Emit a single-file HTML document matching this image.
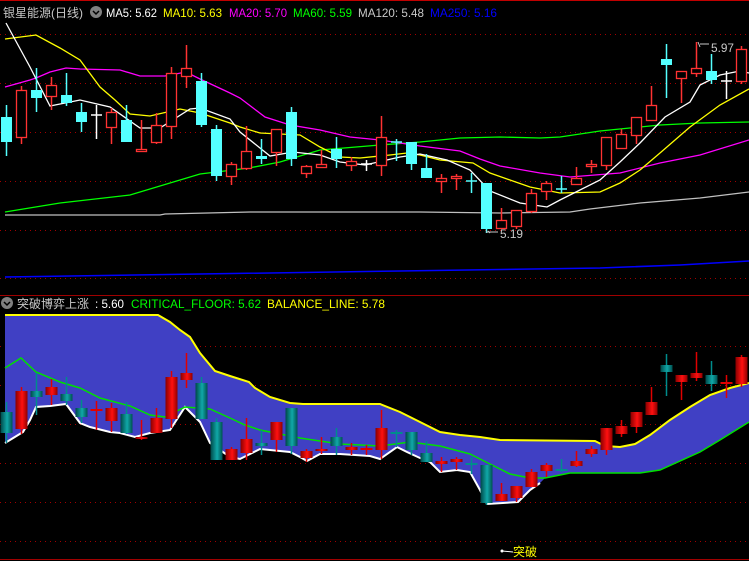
<!DOCTYPE html>
<html><head><meta charset="utf-8"><style>
html,body{margin:0;padding:0;background:#000;width:749px;height:561px;overflow:hidden}
svg{position:absolute;left:0;top:0}
.t{font-family:"Liberation Sans","Noto Sans CJK SC",sans-serif;font-size:12px}
</style></head><body>
<svg id="s" width="749" height="561" xmlns="http://www.w3.org/2000/svg">
<defs>
<linearGradient id="gr" x1="0" x2="1" y1="0" y2="0"><stop offset="0" stop-color="#8a0000"/><stop offset="0.55" stop-color="#ff1010"/><stop offset="1" stop-color="#900000"/></linearGradient>
<linearGradient id="gt" x1="0" x2="1" y1="0" y2="0"><stop offset="0" stop-color="#004848"/><stop offset="0.55" stop-color="#10a8a8"/><stop offset="1" stop-color="#005050"/></linearGradient>
</defs>
<line x1="0" y1="0.5" x2="749" y2="0.5" stroke="#c00000"/>
<line x1="0" y1="295.5" x2="749" y2="295.5" stroke="#a00000"/>
<line x1="0" y1="559.5" x2="749" y2="559.5" stroke="#a00000"/>
<g id="grid" stroke="#a00000" stroke-dasharray="1,4"></g>
<g id="band"></g>
<g id="lines" fill="none"></g>
<g id="cand"></g>
<text class="t" x="3" y="17" fill="#c8c8c8" textLength="80" lengthAdjust="spacingAndGlyphs">银星能源(日线)</text>
<circle cx="96" cy="12" r="6" fill="#808080"/><path d="M93 11l3 3 3-3" stroke="#000" fill="none" stroke-width="1.5"/>
<text class="t" x="106" y="17" fill="#fff" textLength="51" lengthAdjust="spacingAndGlyphs">MA5: 5.62</text>
<text class="t" x="163" y="17" fill="#ffff00" textLength="59" lengthAdjust="spacingAndGlyphs">MA10: 5.63</text>
<text class="t" x="229" y="17" fill="#ff00ff" textLength="58" lengthAdjust="spacingAndGlyphs">MA20: 5.70</text>
<text class="t" x="293" y="17" fill="#00ff00" textLength="59" lengthAdjust="spacingAndGlyphs">MA60: 5.59</text>
<text class="t" x="358" y="17" fill="#c8c8c8" textLength="66" lengthAdjust="spacingAndGlyphs">MA120: 5.48</text>
<text class="t" x="430" y="17" fill="#0000ff" textLength="67" lengthAdjust="spacingAndGlyphs">MA250: 5.16</text>
<circle cx="7" cy="303" r="6" fill="#808080"/><path d="M4 302l3 3 3-3" stroke="#000" fill="none" stroke-width="1.5"/>
<text class="t" x="17" y="308" fill="#c8c8c8" textLength="72" lengthAdjust="spacingAndGlyphs">突破博弈上涨</text>
<text class="t" x="95" y="308" fill="#fff" textLength="29" lengthAdjust="spacingAndGlyphs">: 5.60</text>
<text class="t" x="131" y="308" fill="#00ff00" textLength="130" lengthAdjust="spacingAndGlyphs">CRITICAL_FLOOR: 5.62</text>
<text class="t" x="267" y="308" fill="#ffff00" textLength="118" lengthAdjust="spacingAndGlyphs">BALANCE_LINE: 5.78</text>
<text class="t" x="711" y="52" fill="#c8c8c8" textLength="23" lengthAdjust="spacingAndGlyphs">5.97</text>
<path d="M698 42l2 5 M700 44h9" stroke="#c8c8c8" fill="none"/>
<text class="t" x="500" y="238" fill="#c8c8c8" textLength="23" lengthAdjust="spacingAndGlyphs">5.19</text>
<path d="M488 231l2 2 M486 232h12" stroke="#c8c8c8" fill="none"/>
<text class="t" x="513" y="556" fill="#ffff00" textLength="24" lengthAdjust="spacingAndGlyphs">突破</text>
<circle cx="502" cy="551" r="1.5" fill="#fff"/><line x1="502" y1="551" x2="513" y2="552" stroke="#fff"/>
</svg>
<script>
var NS="http://www.w3.org/2000/svg",s=document.getElementById('s');
function el(p,t,a){var e=document.createElementNS(NS,t);for(var k in a)e.setAttribute(k,a[k]);document.getElementById(p).appendChild(e);return e;}
[34,83,132,181,230,278,346,385,424,463,502,541].forEach(function(y){el('grid','line',{x1:0,x2:749,y1:y+.5,y2:y+.5});});
function P(a){return a.map(function(p){return p[0]+','+p[1]}).join(' ');}
var top_=[[5,315],[158,315],[170,322],[180,330],[190,337],[200,353],[215,371],[230,376],[249,382],[255,388],[270,397],[290,403],[303,404],[380,404],[400,412],[420,422],[440,432],[460,435],[480,437],[500,440],[595,441],[605,446],[620,447],[635,444],[650,435],[670,420],[690,407],[710,395],[730,388],[749,383]];
var bot=[[5,443],[23,432],[30,420],[36,407],[50,406],[66,404],[80,423],[90,427],[110,432],[120,433],[135,437],[150,433],[170,430],[185,407],[200,422],[210,443],[230,457],[240,459],[260,449],[290,452],[300,457],[307,461],[320,454],[340,454],[370,456],[380,459],[397,447],[407,452],[420,458],[430,462],[440,472],[457,470],[470,472],[480,490],[487,504],[518,502],[530,490],[540,483],[545,478],[570,473],[640,473],[660,470],[700,452],[720,440],[749,422]];
el('band','polygon',{points:P(top_.concat(bot.slice().reverse())),fill:'#4040c4'});
var mid=[[5,368],[21,358],[36,372],[60,382],[80,388],[100,398],[130,406],[150,415],[165,417],[185,407],[210,409],[230,418],[245,425],[260,430],[300,438],[340,444],[380,446],[410,442],[440,446],[470,454],[490,464],[510,474],[530,478],[545,478],[570,473],[640,473],[660,470],[700,452],[720,440],[749,422]];
el('lines','polyline',{points:P(top_),stroke:'#ffff00','stroke-width':2});
el('lines','polyline',{points:P(bot.slice(0,38)),stroke:'#fff','stroke-width':2});
el('lines','polyline',{points:P(mid),stroke:'#00e000','stroke-width':1.5});
var L={
'#c8c8c8':[[5,277],[200,274],[400,271],[600,268],[680,265],[749,261]],
'#a0a0a0':[[5,215],[160,215],[165,214],[250,212],[420,212],[500,213],[570,212],[590,209],[640,203],[700,198],[749,192]],
'#00ff00':[[5,212],[60,203],[130,195],[200,174],[249,168],[280,162],[320,150],[380,145],[420,142],[460,138],[500,137],[540,138],[560,137],[600,131],[660,125],[700,123],[749,122]],
'#ff00ff':[[5,87],[30,80],[36,78],[50,72],[66,68],[80,69],[120,70],[140,76],[165,76],[186,72],[200,79],[230,93],[240,98],[265,117],[290,125],[320,130],[350,137],[380,140],[420,146],[460,151],[480,159],[500,166],[540,173],[570,177],[620,173],[660,163],[700,155],[749,140]],
'#ffff00':[[5,39],[36,35],[60,48],[80,60],[100,87],[115,100],[130,114],[150,116],[180,109],[200,113],[230,123],[240,127],[260,133],[300,135],[320,147],[340,157],[360,158],[390,155],[407,153],[420,155],[440,160],[473,163],[490,173],[530,187],[560,193],[600,192],[620,183],[640,170],[660,153],[690,127],[720,105],[749,89]],
'#ffffff':[[6,23],[30,67],[50,106],[80,100],[110,107],[140,128],[160,128],[190,109],[200,108],[230,119],[240,132],[260,148],[270,156],[293,152],[320,155],[340,162],[365,165],[400,157],[420,154],[447,160],[470,170],[490,191],[520,203],[547,207],[560,200],[600,180],[620,162],[640,143],[665,117],[690,102],[700,85],[720,75],[740,71],[749,73]]};
el('lines','polyline',{points:P(L['#c8c8c8']),stroke:'#0000ff','stroke-width':1.5});
for(var c in L){if(c=='#c8c8c8')continue;el('lines','polyline',{points:P(L[c]),stroke:c=='#a0a0a0'?'#c0c0c0':c,'stroke-width':1.3});}
var T=[['c',117,142,105,156],['r',90,137,86,144],['c',90,98,68,112],['r',85,96,77,110],['c',95,103,73,106],['c',112,122,103,132],['w',115,115,105,139],['r',112,127,108,144],['c',120,142,105,142],['r',149,151,120,151],['r',125,142,113,144],['r',73,126,67,139],['r',68,76,45,88],['c',81,125,73,127],['c',129,176,125,181],['r',164,176,162,185],['r',151,168,126,170],['c',156,159,139,164],['r',129,152,129,166],['c',112,159,107,166],['r',166,173,165,178],['r',164,167,150,168],['c',149,159,137,168],['r',161,165,157,171],['w',164,164,160,171],['r',137,165,116,176],['k',142,143,139,161],['c',142,164,142,170],['c',168,178,154,178],['r',178,181,174,193],['r',176,178,174,190],['k',181,181,173,193],['c',183,229,183,233],['r',220,228,208,228],['r',210,226,210,229],['r',193,211,189,213],['r',183,191,181,200],['k',189,189,176,193],['r',178,184,167,185],['r',164,166,160,173],['r',137,165,137,170],['r',134,148,129,149],['r',117,135,117,144],['r',105,120,86,120],['c',59,65,44,98],['r',71,78,71,103],['r',68,73,42,77],['c',71,80,54,84],['w',81,81,71,99],['r',49,81,46,84]];
var B=[['t',412,433,402,443],['r',391,429,387,434],['t',391,397,373,415],['r',387,395,379,405],['t',394,401,377,405],['t',408,417,400,423],['rx',410,410,401,430],['r',408,421,403,432],['t',414,433,402,434],['r',437,439,420,440],['r',418,433,408,433],['r',377,419,371,428],['r',373,380,353,388],['t',383,419,377,419],['t',422,460,418,460],['r',449,460,447,460],['r',439,453,418,460],['t',443,446,430,455],['r',422,440,422,452],['t',408,446,408,454],['r',451,458,449,462],['r',449,451,437,454],['t',437,446,428,455],['r',447,450,443,455],['rx',449,449,445,455],['r',428,450,410,459],['tx',433,433,430,447],['t',432,450,432,455],['t',453,462,441,462],['r',461,464,457,472],['r',459,462,457,470],['tx',464,464,457,474],['t',465,503,465,505],['r',494,501,483,501],['r',486,498,486,502],['r',472,487,469,487],['r',465,471,463,477],['tx',470,470,459,472],['r',461,466,451,467],['r',449,454,446,457],['r',428,450,428,455],['r',426,434,420,437],['r',412,427,412,433],['r',402,415,387,415],['t',365,372,354,396],['r',375,382,375,400],['r',373,378,352,381],['t',375,384,361,391],['rx',383,383,375,398],['r',357,384,355,387]];
T.forEach(function(d,i){var x=6.5+15*i,col=d[0]=='r'?'#ff3232':d[0]=='w'?'#ffffff':'#54ffff';
 el('cand','line',{x1:x,x2:x,y1:d[3],y2:d[4],stroke:col,'stroke-width':1.5});
 if(d[0]=='r')el('cand','rect',{x:x-5,y:d[1]+.5,width:10,height:Math.max(d[2]-d[1],1),fill:'#000',stroke:col,'stroke-width':1.3});
 else if(d[0]=='c')el('cand','rect',{x:x-5.5,y:d[1],width:11,height:Math.max(d[2]-d[1],2),fill:col});
 else el('cand','line',{x1:x-5.5,x2:x+5.5,y1:d[1],y2:d[1],stroke:col,'stroke-width':1.5});});
B.forEach(function(d,i){var x=6.5+15*i,red=d[0][0]=='r',col=red?'#e00000':'#008c8c';
 el('cand','line',{x1:x,x2:x,y1:d[3],y2:d[4],stroke:col,'stroke-width':1.5});
 if(d[0].length==1)el('cand','rect',{x:x-6,y:d[1],width:12,height:Math.max(d[2]-d[1],2),fill:red?'url(#gr)':'url(#gt)'});
 else el('cand','line',{x1:x-6,x2:x+6,y1:d[1],y2:d[1],stroke:col,'stroke-width':2});});
</script>
</body></html>
